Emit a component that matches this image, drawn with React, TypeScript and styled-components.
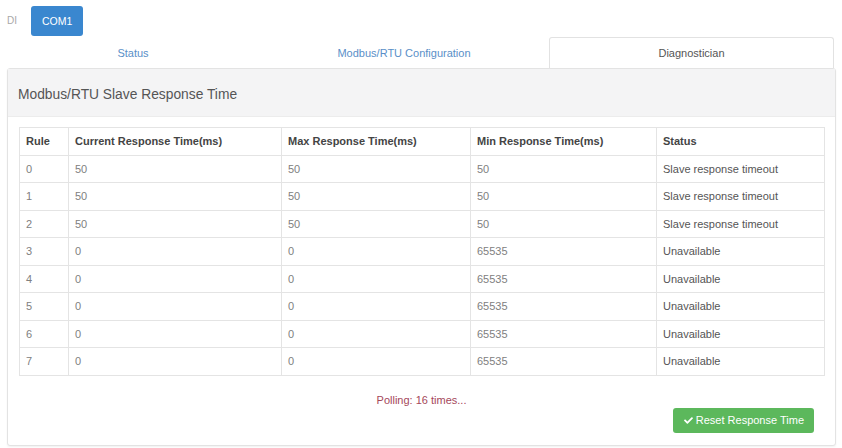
import styled, { createGlobalStyle } from "styled-components";
import { FaCheck } from "react-icons/fa";

type Rule = {
  id: number;
  current: number;
  max: number;
  min: number;
  status: string;
};

const rules: Rule[] = [
  { id: 0, current: 50, max: 50, min: 50, status: "Slave response timeout" },
  { id: 1, current: 50, max: 50, min: 50, status: "Slave response timeout" },
  { id: 2, current: 50, max: 50, min: 50, status: "Slave response timeout" },
  { id: 3, current: 0, max: 0, min: 65535, status: "Unavailable" },
  { id: 4, current: 0, max: 0, min: 65535, status: "Unavailable" },
  { id: 5, current: 0, max: 0, min: 65535, status: "Unavailable" },
  { id: 6, current: 0, max: 0, min: 65535, status: "Unavailable" },
  { id: 7, current: 0, max: 0, min: 65535, status: "Unavailable" },
];

const tabs = ["Status", "Modbus/RTU Configuration", "Diagnostician"];

const App = () => {
  const activeTab = "Diagnostician";

  return (
    <>
      <GlobalStyle />
      <Page>
        <TopBar>
          <PortLink>DI</PortLink>
          <PortButton>COM1</PortButton>
        </TopBar>

        <TabList>
          {tabs.map((tab) => (
            <Tab key={tab} $active={tab === activeTab}>
              {tab}
            </Tab>
          ))}
        </TabList>

        <Panel>
          <PanelHeading>Modbus/RTU Slave Response Time</PanelHeading>
          <PanelBody>
            <Table>
              <colgroup>
                <col style={{ width: 49 }} />
                <col style={{ width: 213 }} />
                <col style={{ width: 189 }} />
                <col style={{ width: 186 }} />
                <col />
              </colgroup>
              <thead>
                <tr>
                  <Th>Rule</Th>
                  <Th>Current Response Time(ms)</Th>
                  <Th>Max Response Time(ms)</Th>
                  <Th>Min Response Time(ms)</Th>
                  <Th>Status</Th>
                </tr>
              </thead>
              <tbody>
                {rules.map((rule) => (
                  <tr key={rule.id}>
                    <Td>{rule.id}</Td>
                    <Td>{rule.current}</Td>
                    <Td>{rule.max}</Td>
                    <Td>{rule.min}</Td>
                    <Td $strong>{rule.status}</Td>
                  </tr>
                ))}
              </tbody>
            </Table>

            <Polling>Polling: 16 times...</Polling>

            <Actions>
              <ResetButton>
                <FaCheck size={9} />
                Reset Response Time
              </ResetButton>
            </Actions>
          </PanelBody>
        </Panel>
      </Page>
    </>
  );
};

const GlobalStyle = createGlobalStyle`
  html, body {
    margin: 0;
    padding: 0;
    background: #fff;
  }
  body {
    font-family: "Liberation Sans", Arial, sans-serif;
    font-size: 11px;
    color: #555;
  }
`;

const Page = styled.div`
  width: 842px;
  height: 448px;
  padding: 0 6px 0 7px;
  box-sizing: border-box;
  overflow: hidden;
`;

const TopBar = styled.div`
  display: flex;
  align-items: center;
  gap: 14px;
  height: 30px;
  padding-top: 6px;
`;

const PortLink = styled.span`
  font-size: 10px;
  color: #a8a8a8;
  margin-top: -2px;
`;

const PortButton = styled.button`
  height: 30px;
  padding: 0 11px;
  border: none;
  border-radius: 3px;
  background: #3a87cf;
  color: #fff;
  font-family: inherit;
  font-size: 10.5px;
  cursor: pointer;
`;

const TabList = styled.div`
  display: grid;
  grid-template-columns: 252px 290px 285px;
  height: 31px;
  margin-top: 1px;
`;

const Tab = styled.div<{ $active?: boolean }>`
  display: flex;
  align-items: center;
  justify-content: center;
  font-size: 11px;
  color: ${(p) => (p.$active ? "#555" : "#5a8fc8")};
  background: ${(p) => (p.$active ? "#fff" : "transparent")};
  border: 1px solid ${(p) => (p.$active ? "#e2e2e2" : "transparent")};
  border-bottom: none;
  border-radius: 3px 3px 0 0;
  cursor: pointer;
`;

const Panel = styled.div`
  border: 1px solid #e3e3e3;
  border-radius: 3px;
  background: #fff;
  box-shadow: 0 1px 2px rgba(0, 0, 0, 0.06);
  display: flex;
  flex-direction: column;
`;

const PanelHeading = styled.div`
  display: flex;
  align-items: center;
  flex-shrink: 0;
  height: 48px;
  padding: 4px 10px 0;
  box-sizing: border-box;
  background: #f4f4f5;
  border-bottom: 1px solid #ececec;
  font-size: 13.8px;
  color: #555;
`;

const PanelBody = styled.div`
  padding: 10px 11px 12px;
  display: flex;
  flex-direction: column;
`;

const Table = styled.table`
  width: 806px;
  border-collapse: collapse;
  table-layout: fixed;
`;

const Th = styled.th`
  height: 26.5px;
  padding: 0 6px;
  border: 1px solid #e4e4e4;
  text-align: left;
  font-weight: bold;
  font-size: 11px;
  color: #444;
`;

const Td = styled.td<{ $strong?: boolean }>`
  height: 26.5px;
  padding: 0 6px;
  border: 1px solid #e4e4e4;
  font-size: 11px;
  color: ${(p) => (p.$strong ? "#555" : "#808080")};
`;

const Polling = styled.div`
  margin-top: 17px;
  line-height: 14px;
  text-align: center;
  font-size: 11px;
  color: #a5475a;
`;

const Actions = styled.div`
  display: flex;
  justify-content: flex-end;
  padding-right: 10px;
  margin-top: 1px;
`;

const ResetButton = styled.button`
  display: flex;
  align-items: center;
  gap: 3px;
  height: 25px;
  padding: 0 10px 0 11px;
  border: none;
  border-radius: 3px;
  background: #5cb85c;
  color: #fff;
  font-family: inherit;
  font-size: 11px;
  cursor: pointer;
`;

export default App;
